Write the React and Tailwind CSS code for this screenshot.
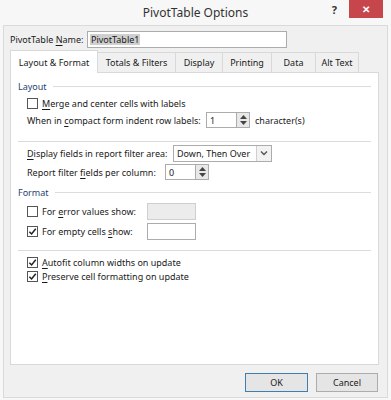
const font = { fontFamily: '"Noto Sans", "Open Sans", sans-serif' };

function U({ children }) {
  return <span className="underline underline-offset-[1.5px]">{children}</span>;
}

function Check({ checked }) {
  return (
    <span className="flex h-[11px] w-[11px] shrink-0 items-center justify-center border border-[#555] bg-white">
      {checked ? (
        <svg width="9" height="9" viewBox="0 0 10 10">
          <path d="M1.5 5.2 L4 7.7 L8.6 2" fill="none" stroke="#222" strokeWidth="1.7" />
        </svg>
      ) : null}
    </span>
  );
}

function Spinner() {
  return (
    <span className="flex h-[16px] w-[13px] flex-col items-center justify-center gap-[2px] border border-l-0 border-[#acacac] bg-[#e8e8e8]">
      <svg width="7" height="4" viewBox="0 0 7 4">
        <path d="M0 4 L3.5 0 L7 4 Z" fill="#444" />
      </svg>
      <svg width="7" height="4" viewBox="0 0 7 4">
        <path d="M0 0 L3.5 4 L7 0 Z" fill="#444" />
      </svg>
    </span>
  );
}

function Group({ title }) {
  return (
    <div className="flex h-[16px] items-center gap-[6px]">
      <span className="text-[#1e3f73]">{title}</span>
      <span className="h-px flex-1 bg-[#dcdcdc]" />
    </div>
  );
}

const tabs = ['Totals & Filters', 'Display', 'Printing', 'Data', 'Alt Text'];
const tabW = ['w-[79px]', 'w-[48px]', 'w-[50px]', 'w-[45px]', 'w-[44px]'];

export default function App() {
  return (
    <div
      className="h-[400px] w-[391px] whitespace-nowrap bg-[#f7f7f7] text-[9px] leading-none text-[#1a1a1a]"
      style={font}
    >
      <div className="relative flex h-[25px] items-center justify-center">
        <span className="text-[12px] text-[#333]">PivotTable Options</span>
        <div className="absolute right-[8px] top-0 flex items-start">
          <span className="mr-[12px] mt-[4px] text-[11px] font-bold text-[#333]">?</span>
          <span className="flex h-[18px] w-[34px] items-center justify-center bg-[#c7464b] text-[10px] font-bold text-white">
            ✕
          </span>
        </div>
      </div>

      <div className="mx-[3px] h-[373px] border border-[#dadada] bg-[#f0f0f0] px-[6px]">
        <div className="mt-[5px] flex h-[17px] items-center">
          <span className="w-[77px] text-[#1a1a1a]">
            PivotTable <U>N</U>ame:
          </span>
          <span className="flex h-[17px] w-[200px] items-center border border-[#acacac] bg-white px-[2px]">
            <span className="bg-[#cfcfcf] px-[1px] py-[1px]">PivotTable1</span>
          </span>
        </div>

        <div className="mt-[3px] flex h-[21px] items-end">
          <div className="relative z-10 -mb-px flex h-[23px] w-[88px] items-center justify-center border border-b-0 border-[#d9d9d9] bg-white">
            Layout &amp; Format
          </div>
          {tabs.map((t, i) => (
            <div
              key={t}
              className={`-ml-px flex h-[20px] items-center justify-center border border-b-0 border-[#d9d9d9] bg-[#f0f0f0] ${tabW[i]}`}
            >
              {t}
            </div>
          ))}
        </div>

        <div className="h-[293px] w-[369px] border border-[#d9d9d9] bg-white px-[7px] pt-[5px]">
          <Group title="Layout" />
          <div className="ml-[9px] mt-px flex h-[16px] items-center gap-[4px]">
            <Check />
            <span>
              <U>M</U>erge and center cells with labels
            </span>
          </div>
          <div className="ml-[9px] flex h-[18px] items-center">
            <span className="w-[179px]">
              When in <U>c</U>ompact form indent row labels:
            </span>
            <span className="flex h-[16px] w-[31px] items-center border border-[#acacac] bg-white px-[3px]">1</span>
            <Spinner />
            <span className="ml-[5px]">character(s)</span>
          </div>
          <div className="mt-[12px] h-px bg-[#dcdcdc]" />
          <div className="ml-[9px] mt-[3px] flex h-[16px] items-center">
            <span className="w-[146px]">
              <U>D</U>isplay fields in report filter area:
            </span>
            <span className="flex h-[17px] w-[99px] items-center border border-[#acacac] bg-white">
              <span className="flex-1 px-[3px]">Down, Then Over</span>
              <span className="flex h-full w-[15px] items-center justify-center border-l border-[#cfcfcf] bg-[#f2f2f2]">
                <svg width="8" height="6" viewBox="0 0 8 6">
                  <path d="M1 1.5 L4 4.5 L7 1.5" fill="none" stroke="#555" strokeWidth="1.4" />
                </svg>
              </span>
            </span>
          </div>
          <div className="ml-[9px] mt-[3px] flex h-[16px] items-center">
            <span className="w-[138px]">
              Report filter <U>f</U>ields per column:
            </span>
            <span className="flex h-[16px] w-[31px] items-center border border-[#acacac] bg-white px-[3px]">0</span>
            <Spinner />
          </div>
          <div className="mt-[4px]">
            <Group title="Format" />
          </div>
          <div className="ml-[9px] mt-[3px] flex h-[16px] items-center gap-[4px]">
            <Check />
            <span className="w-[101px]">
              For <U>e</U>rror values show:
            </span>
            <span className="h-[17px] w-[49px] border border-[#cfcfcf] bg-[#ececec]" />
          </div>
          <div className="ml-[9px] mt-[4px] flex h-[16px] items-center gap-[4px]">
            <Check checked />
            <span className="w-[101px]">
              For empty cells <U>s</U>how:
            </span>
            <span className="h-[17px] w-[49px] border border-[#acacac] bg-white" />
          </div>
          <div className="mt-[11px] h-px bg-[#dcdcdc]" />
          <div className="ml-[9px] mt-[4px] flex h-[14px] items-center gap-[4px]">
            <Check checked />
            <span>
              <U>A</U>utofit column widths on update
            </span>
          </div>
          <div className="ml-[9px] flex h-[14px] items-center gap-[4px]">
            <Check checked />
            <span>
              <U>P</U>reserve cell formatting on update
            </span>
          </div>
        </div>

        <div className="mt-[8px] flex justify-end gap-[8px] pr-[3px]">
          <button className="flex h-[19px] w-[63px] items-center justify-center border border-[#3c7fb1] bg-[#e5e5e5] text-[9px] text-[#1a1a1a]">
            OK
          </button>
          <button className="flex h-[19px] w-[62px] items-center justify-center border border-[#acacac] bg-[#e5e5e5] text-[9px] text-[#1a1a1a]">
            Cancel
          </button>
        </div>
      </div>
    </div>
  );
}
